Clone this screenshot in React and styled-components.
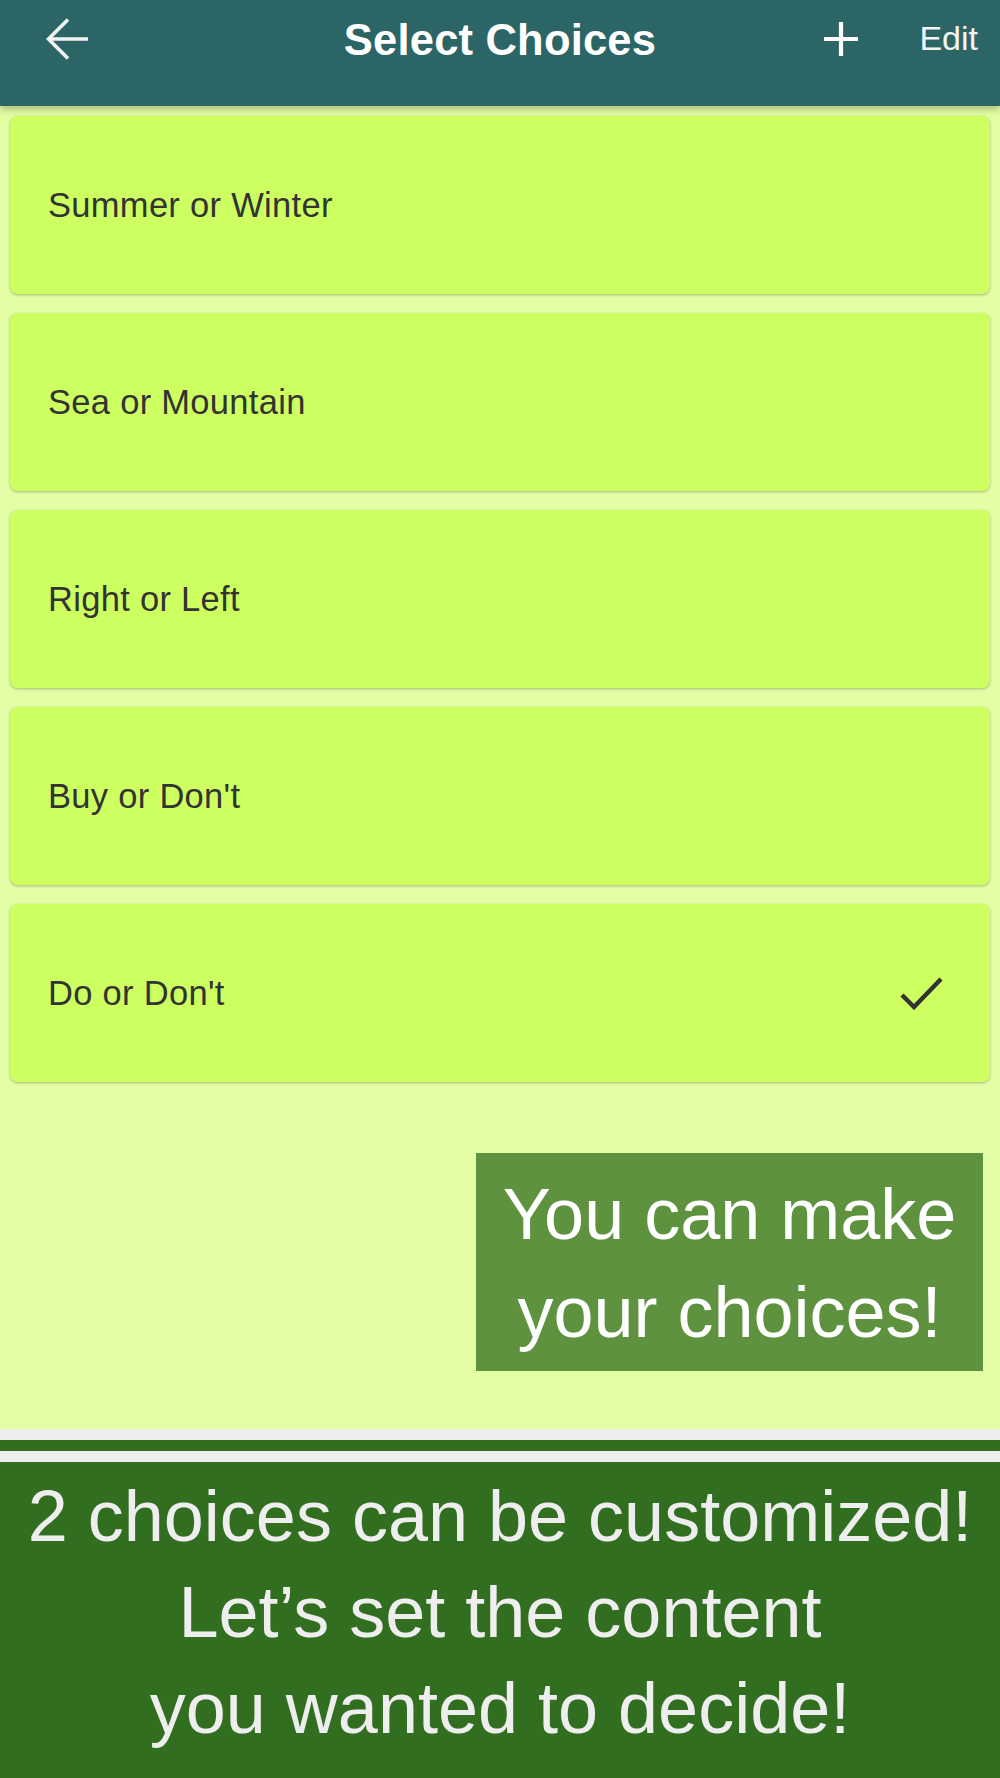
import React from "react";
import styled, { createGlobalStyle } from "styled-components";

const Global = createGlobalStyle`
  html, body {
    margin: 0;
    padding: 0;
    background: #e4fea6;
  }
  body {
    font-family: "Liberation Sans", Arial, sans-serif;
    overflow: hidden;
  }
  * {
    box-sizing: border-box;
  }
`;

const Screen = styled.div`
  width: 1000px;
  height: 1778px;
  display: flex;
  flex-direction: column;
  background: #e4fea6;
`;

const Header = styled.header`
  position: relative;
  z-index: 2;
  height: 106px;
  flex-shrink: 0;
  background: #2b6565;
  box-shadow: 0 3px 8px rgba(0, 0, 0, 0.28);
  display: grid;
  grid-template-columns: 1fr auto 1fr;
  align-items: start;
`;

const HeaderSide = styled.div`
  height: 77px;
  display: flex;
  align-items: center;
  justify-content: ${(p) => (p.$end ? "flex-end" : "flex-start")};
  padding: ${(p) => (p.$end ? "0 22px 0 0" : "0 0 0 46px")};
  gap: 60px;
`;

const Title = styled.h1`
  margin: 0;
  height: 77px;
  padding-top: 4px;
  display: flex;
  align-items: center;
  font-size: 43.5px;
  font-weight: 700;
  color: #ffffff;
  letter-spacing: 0.2px;
`;

const EditButton = styled.span`
  font-size: 34px;
  color: #f4f4f4;
`;

const List = styled.div`
  display: flex;
  flex-direction: column;
  gap: 19px;
  padding: 10px 10px 0;
`;

const Card = styled.div`
  height: 178px;
  background: #ccff5f;
  border-radius: 8px;
  box-shadow: 0 1px 3px rgba(0, 0, 0, 0.28);
  display: flex;
  align-items: center;
  justify-content: space-between;
  padding: 0 45px 0 38px;
`;

const CardLabel = styled.span`
  font-size: 34.5px;
  color: #333333;
  letter-spacing: 0.3px;
`;

const BubbleRow = styled.div`
  display: flex;
  justify-content: flex-end;
  padding: 71px 17px 58px 0;
`;

const Bubble = styled.div`
  width: 507px;
  height: 218px;
  background: #5e923e;
  color: #ffffff;
  font-size: 72px;
  line-height: 98px;
  text-align: center;
  padding-top: 12px;
`;

const Divider = styled.div`
  height: 33px;
  flex-shrink: 0;
  background: #316e1f;
  border-top: 11px solid #eeeeee;
  border-bottom: 11px solid #eeeeee;
`;

const Footer = styled.footer`
  flex: 1;
  background: #316e1f;
  color: #eeeeee;
  font-size: 72px;
  line-height: 96px;
  text-align: center;
  padding-top: 6px;
`;

const BackIcon = () => (
  <svg width="44" height="44" viewBox="0 0 44 44" fill="none">
    <path
      d="M2 22 H42 M22 2.5 L2.5 22 L22 41.5"
      stroke="#f2f2f2"
      strokeWidth="3.6"
      strokeLinejoin="miter"
    />
  </svg>
);

const PlusIcon = () => (
  <svg width="36" height="36" viewBox="0 0 36 36" fill="none">
    <path d="M18 1 V35 M1 18 H35" stroke="#ffffff" strokeWidth="4.2" />
  </svg>
);

const CheckIcon = () => (
  <svg width="46" height="34" viewBox="0 0 46 34" fill="none">
    <polyline
      points="3,19 15,31 42,3"
      stroke="#333333"
      strokeWidth="4.4"
      strokeLinejoin="miter"
    />
  </svg>
);

const choices = [
  { label: "Summer or Winter" },
  { label: "Sea or Mountain" },
  { label: "Right or Left" },
  { label: "Buy or Don't" },
  { label: "Do or Don't", selected: true },
];

const App = () => {
  return (
    <Screen>
      <Global />
      <Header>
        <HeaderSide>
          <BackIcon />
        </HeaderSide>
        <Title>Select Choices</Title>
        <HeaderSide $end>
          <PlusIcon />
          <EditButton>Edit</EditButton>
        </HeaderSide>
      </Header>
      <List>
        {choices.map((c, i) => (
          <Card key={i}>
            <CardLabel>{c.label}</CardLabel>
            {c.selected && <CheckIcon />}
          </Card>
        ))}
      </List>
      <BubbleRow>
        <Bubble>
          You can make
          <br />
          your choices!
        </Bubble>
      </BubbleRow>
      <Divider />
      <Footer>
        2 choices can be customized!
        <br />
        Let’s set the content
        <br />
        you wanted to decide!
      </Footer>
    </Screen>
  );
};

export default App;
